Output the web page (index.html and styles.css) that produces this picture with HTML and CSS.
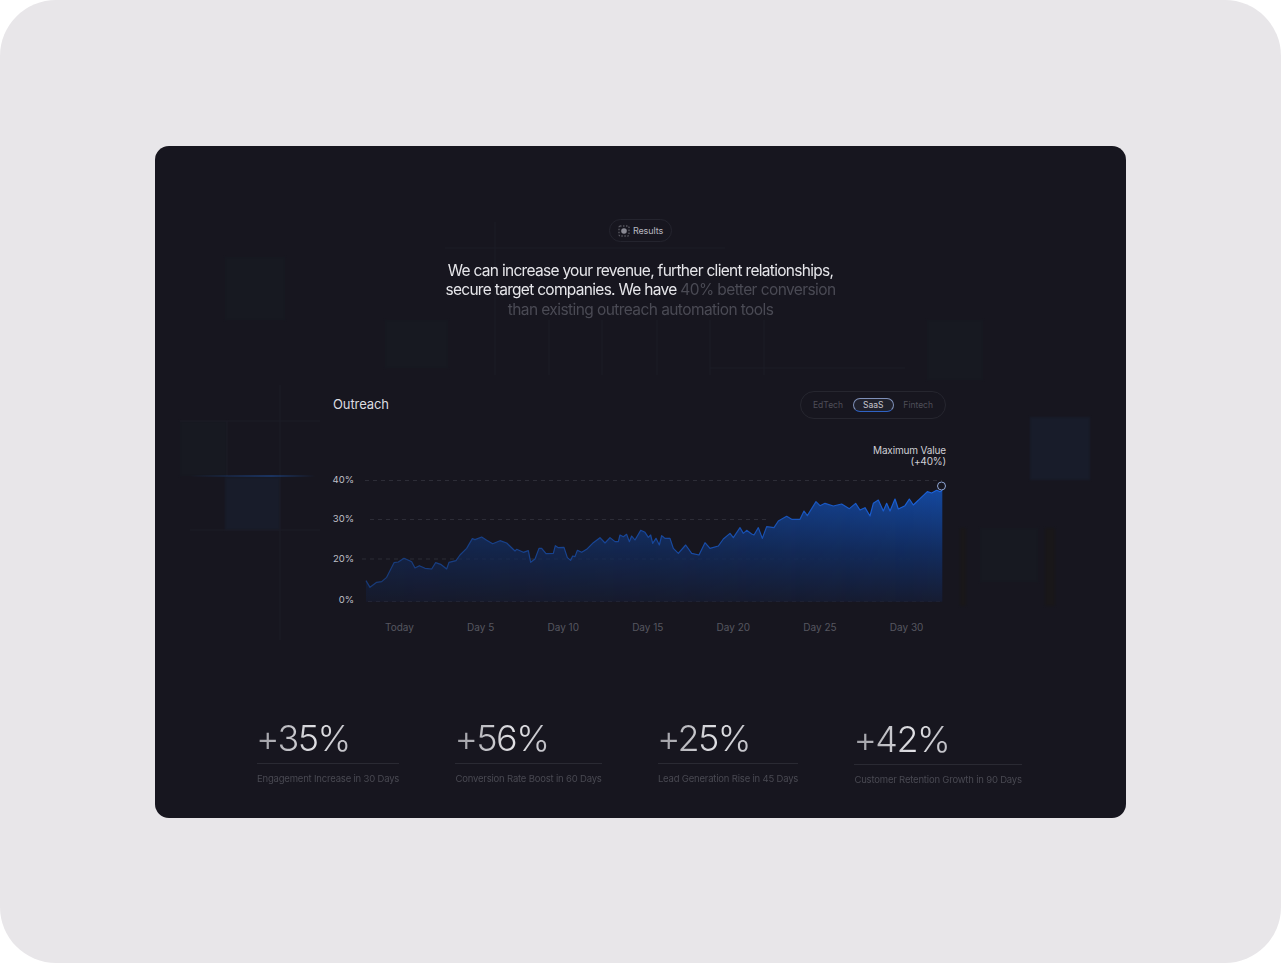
FILE: index.html
```html
<!DOCTYPE html>
<html lang="en">
<head>
<meta charset="utf-8">
<title>Results</title>
<link rel="stylesheet" href="styles.css">
</head>
<body>
<main class="frame">
  <section class="card">
    <svg class="decor" viewBox="155 146 971 672" aria-hidden="true">
      <defs>
        <linearGradient id="glow" x1="0" x2="1" y1="0" y2="0">
          <stop offset="0" stop-color="#1d4f9e" stop-opacity="0"/>
          <stop offset=".65" stop-color="#1d4f9e"/>
          <stop offset="1" stop-color="#1d4f9e" stop-opacity="0"/>
        </linearGradient>
      </defs>
      <rect class="tile tile-a" x="225" y="257" width="60" height="63"/>
      <rect class="tile tile-a" x="385" y="320" width="63" height="48"/>
      <rect class="tile tile-a" x="927" y="320" width="56" height="60"/>
      <rect class="tile tile-a" x="180" y="421" width="47" height="55"/>
      <rect class="tile tile-b" x="225" y="477" width="55" height="53"/>
      <rect class="tile tile-b" x="1030" y="417" width="60" height="63"/>
      <rect class="tile tile-a" x="980" y="528" width="58" height="54"/>
      <rect class="tile tile-c" x="960" y="528" width="6" height="78"/>
      <rect class="tile tile-c" x="1045" y="528" width="10" height="78"/>
      <path class="rule" d="M445 248H725M495 222V375M549 320V375M602 320V375M657 320V375M710 320V375M764 320V375M710 368H905M180 421H320M227 421V476M280 385V640M190 530H320"/>
      <rect x="190" y="475.500" width="125" height="1" fill="url(#glow)"/>
    </svg>

    <div class="pill">
      <svg class="pill-icon" viewBox="0 0 12 12" aria-hidden="true">
        <rect class="pill-dash" x="1" y="1" width="10" height="10" rx="1"/>
        <circle class="pill-core" cx="6" cy="6" r="2.800"/>
      </svg>
      <span>Results</span>
    </div>

    <h1 class="headline">We can increase your revenue, further client relationships,<br>secure target companies. We have <span class="dim">40% better conversion<br>than existing outreach automation tools</span></h1>

    <div class="chart">
      <div class="chart-head">
        <h2 class="chart-title">Outreach</h2>
        <div class="segments">
          <span class="segment">EdTech</span>
          <span class="segment segment-on">SaaS</span>
          <span class="segment">Fintech</span>
        </div>
      </div>
      <p class="max-label">Maximum Value<br>(+40%)</p>
      <div class="plot">
        <div class="y-axis">
          <span>40%</span>
          <span>30%</span>
          <span>20%</span>
          <span class="y-zero">0%</span>
        </div>
        <svg class="plot-svg" viewBox="354 470 592 135" aria-hidden="true">
          <defs>
            <linearGradient id="areaFill" gradientUnits="userSpaceOnUse" x1="0" y1="316" x2="0" y2="650">
              <stop offset="0" stop-color="#14489f"/>
              <stop offset=".55" stop-color="#122c5f"/>
              <stop offset="1" stop-color="#161c32"/>
            </linearGradient>
            <linearGradient id="lineFill" gradientUnits="userSpaceOnUse" x1="138" y1="0" x2="1867" y2="0">
              <stop offset="0" stop-color="#173a78"/>
              <stop offset=".5" stop-color="#17479c"/>
              <stop offset="1" stop-color="#1a62dc"/>
            </linearGradient>
            <linearGradient id="fade" gradientUnits="userSpaceOnUse" x1="138" y1="0" x2="1867" y2="0">
              <stop offset="0" stop-color="#fff" stop-opacity=".62"/>
              <stop offset=".5" stop-color="#fff" stop-opacity=".75"/>
              <stop offset="1" stop-color="#fff"/>
            </linearGradient>
            <mask id="areaMask" maskUnits="userSpaceOnUse" x="100" y="280" width="1800" height="400">
              <rect x="100" y="280" width="1800" height="400" fill="url(#fade)"/>
            </mask>
          </defs>
          <path class="grid" d="M365 480.500H942M370 519.500H770M362 559H925M368 601.500H942"/>
          <g transform="translate(320 385) scale(.33333)">
            <path fill="url(#areaFill)" mask="url(#areaMask)" d="M138 587L150 607L170 592L185 590L200 577L222 533L235 531L252 520L275 530L285 549L298 542L315 550L335 552L347 533L362 538L380 552L387 532L408 527L420 510L440 490L457 461L465 464L485 456L500 466L518 476L540 467L560 474L585 498L590 493L610 502L625 497L632 532L645 522L657 490L665 490L678 506L700 505L706 482L715 488L732 487L742 518L752 526L758 513L765 515L772 496L785 502L800 493L820 473L840 458L855 474L870 458L885 470L895 470L900 450L910 455L920 448L928 470L935 453L945 465L962 436L975 442L985 457L992 450L998 475L1008 460L1018 480L1025 452L1035 460L1050 460L1060 490L1075 505L1097 480L1115 505L1137 510L1155 473L1170 490L1195 483L1210 462L1230 445L1240 458L1260 428L1270 445L1280 436L1295 447L1302 450L1315 428L1327 460L1340 425L1362 428L1375 408L1400 394L1415 403L1440 403L1452 378L1462 392L1488 350L1500 362L1515 355L1540 363L1565 357L1588 371L1607 355L1620 375L1635 368L1650 393L1660 355L1675 345L1690 378L1700 355L1710 378L1725 342L1735 372L1755 362L1768 342L1780 360L1822 320L1835 324L1850 316L1860 320L1867 316V650H138Z"/>
            <path class="line" stroke="url(#lineFill)" d="M138 587L150 607L170 592L185 590L200 577L222 533L235 531L252 520L275 530L285 549L298 542L315 550L335 552L347 533L362 538L380 552L387 532L408 527L420 510L440 490L457 461L465 464L485 456L500 466L518 476L540 467L560 474L585 498L590 493L610 502L625 497L632 532L645 522L657 490L665 490L678 506L700 505L706 482L715 488L732 487L742 518L752 526L758 513L765 515L772 496L785 502L800 493L820 473L840 458L855 474L870 458L885 470L895 470L900 450L910 455L920 448L928 470L935 453L945 465L962 436L975 442L985 457L992 450L998 475L1008 460L1018 480L1025 452L1035 460L1050 460L1060 490L1075 505L1097 480L1115 505L1137 510L1155 473L1170 490L1195 483L1210 462L1230 445L1240 458L1260 428L1270 445L1280 436L1295 447L1302 450L1315 428L1327 460L1340 425L1362 428L1375 408L1400 394L1415 403L1440 403L1452 378L1462 392L1488 350L1500 362L1515 355L1540 363L1565 357L1588 371L1607 355L1620 375L1635 368L1650 393L1660 355L1675 345L1690 378L1700 355L1710 378L1725 342L1735 372L1755 362L1768 342L1780 360L1822 320L1835 324L1850 316L1860 320L1867 316"/>
          </g>
          <circle class="marker" cx="941.500" cy="486" r="4"/>
        </svg>
      </div>
      <div class="x-axis">
        <span>Today</span>
        <span>Day 5</span>
        <span>Day 10</span>
        <span>Day 15</span>
        <span>Day 20</span>
        <span>Day 25</span>
        <span>Day 30</span>
      </div>
    </div>

    <div class="stats">
      <div class="stat"><div class="stat-value">+35%</div><div class="stat-label">Engagement Increase in 30 Days</div></div>
      <div class="stat"><div class="stat-value">+56%</div><div class="stat-label">Conversion Rate Boost in 60 Days</div></div>
      <div class="stat"><div class="stat-value">+25%</div><div class="stat-label">Lead Generation Rise in 45 Days</div></div>
      <div class="stat stat-last"><div class="stat-value">+42%</div><div class="stat-label">Customer Retention Growth in 90 Days</div></div>
    </div>
  </section>
</main>
</body>
</html>
```

FILE: styles.css
```css
* { box-sizing: border-box; }

html, body { margin: 0; background: #fff; }

body { font-family: Inter, "Liberation Sans", sans-serif; }

.frame {
  width: 1281px;
  height: 963px;
  display: flex;
  align-items: flex-start;
  padding: 146px 0 0 155px;
  background: #e8e6e9;
  border-radius: 56px;
  overflow: hidden;
}

.card {
  position: relative;
  width: 971px;
  height: 672px;
  padding-top: 73px;
  display: flex;
  flex-direction: column;
  background: #17161f;
  border-radius: 14px;
  overflow: hidden;
  filter: blur(.35px);
}

.decor {
  position: absolute;
  inset: 0;
  width: 971px;
  height: 672px;
}

.tile { stroke: none; filter: blur(1px); }
.tile-a { fill: #171921; }
.tile-b { fill: #181c2a; }
.tile-c { fill: #191719; }
.rule { fill: none; stroke: #1d1d26; stroke-width: 1; }

.pill {
  position: relative;
  align-self: center;
  width: 63px;
  height: 23px;
  display: flex;
  align-items: center;
  justify-content: center;
  gap: 3px;
  border: 1px solid #24242e;
  border-radius: 12px;
  font-size: 9px;
  color: #b8b8c0;
  letter-spacing: -.1px;
}

.pill-icon { width: 12px; height: 12px; }
.pill-dash { fill: none; stroke: #8d8d96; stroke-width: .8; stroke-dasharray: 1.500 1.500; }
.pill-core { fill: #8a8a94; }

.headline {
  position: relative;
  margin: 18.500px 0 0;
  font-size: 15.500px;
  line-height: 19.500px;
  font-weight: 400;
  letter-spacing: -.7px;
  text-align: center;
  color: #e6e6ea;
}

.dim { color: #4a4a54; letter-spacing: -.58px; }

.chart {
  position: relative;
  width: 613px;
  margin: 72px 0 0 178px;
}

.chart-head {
  height: 28px;
  display: flex;
  align-items: center;
  justify-content: space-between;
}

.chart-title {
  margin: -2px 0 0;
  font-size: 13px;
  font-weight: 400;
  letter-spacing: -.1px;
  color: #dcdce0;
}

.segments {
  width: 146px;
  height: 28px;
  display: flex;
  align-items: center;
  justify-content: space-between;
  padding: 0 12px;
  border: 1px solid #26262f;
  border-radius: 14px;
  font-size: 8.500px;
  color: #4e4e58;
}

.segment-on {
  width: 41px;
  height: 14px;
  display: flex;
  align-items: center;
  justify-content: center;
  border: 1px solid #7f90b8;
  border-bottom-color: #2f62c4;
  border-radius: 7px;
  background: #20212c;
  color: #c8c8d0;
}

.max-label {
  margin: 26px 0 0;
  font-size: 10px;
  line-height: 11px;
  letter-spacing: -.15px;
  text-align: right;
  color: #cfcfd5;
}

.plot {
  display: flex;
  margin-top: 2.500px;
}

.y-axis {
  width: 21px;
  padding-top: 4px;
  display: flex;
  flex-direction: column;
  align-items: flex-end;
  gap: 27.500px;
  font-size: 9.500px;
  line-height: 12px;
  color: #bfbfc6;
}

.y-zero { margin-top: 1.500px; }

.plot-svg {
  display: block;
  width: 592px;
  height: 135px;
}

.grid { fill: none; stroke: #2d2d37; stroke-width: 1; stroke-dasharray: 4 4; }
.line { fill: none; stroke-width: 3.500; stroke-linejoin: round; }
.marker { fill: #17161f; stroke: #8fa6d4; stroke-width: 1; }

.x-axis {
  display: flex;
  gap: 53.200px;
  margin: 15px 0 0 52px;
  font-size: 10px;
  line-height: 12px;
  color: #565660;
}

.stats {
  position: relative;
  display: flex;
  gap: 56.300px;
  margin-top: 86px;
  padding-left: 102px;
}

.stat {
  display: flex;
  flex-direction: column;
}

.stat-value {
  height: 45px;
  padding-bottom: 4px;
  border-bottom: 1px solid #2a2a33;
  font-size: 36px;
  line-height: 38px;
  font-weight: 300;
  letter-spacing: -1.600px;
  text-indent: -1px;
  background: linear-gradient(90deg, #9c9ca2 0, #e2e2e6 60px, #bfbfc5 92px);
  -webkit-background-clip: text;
  background-clip: text;
  color: transparent;
}

.stat-label {
  margin-top: 9.500px;
  font-size: 9.500px;
  line-height: 12px;
  letter-spacing: -.19px;
  white-space: nowrap;
  color: #494952;
}

.stat-last { margin-top: 1px; }
```
